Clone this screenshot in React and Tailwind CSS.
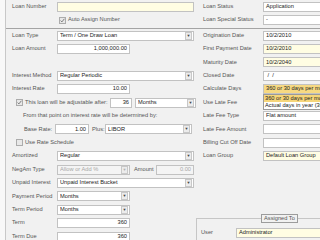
import React from "react";

const ROW = "h-[13.4px] flex items-center";

function Label({ children, w = "w-[45px]" }) {
  return <span className={`${w} shrink-0 text-[#555555] whitespace-nowrap`}>{children}</span>;
}

function TextBox({ value = "", yellow, right, w = "w-[73px]", disabled }) {
  return (
    <div
      className={`${w} h-[10px] shrink-0 border border-[#c2c2c2] flex items-center px-[2px] overflow-hidden whitespace-nowrap ${
        yellow ? "bg-[#fffde3]" : disabled ? "bg-[#f4f4f4]" : "bg-white"
      } ${right ? "justify-end" : ""} ${disabled ? "text-[#a8a8a8]" : "text-[#222222]"}`}
    >
      {value}
    </div>
  );
}

function Combo({ value, w = "w-[137px]", disabled, children, bg }) {
  return (
    <div
      className={`relative ${w} h-[10px] shrink-0 border border-[#c2c2c2] flex items-center pl-[2px] ${
        bg ? bg : disabled ? "bg-[#f4f4f4]" : "bg-white"
      } ${disabled ? "text-[#a8a8a8]" : "text-[#222222]"}`}
    >
      <span className="flex-1 overflow-hidden whitespace-nowrap">{value}</span>
      <span className="w-[7px] h-[8px] mr-[1px] border border-[#c8c8c8] bg-[#ececec] flex items-center justify-center">
        <span className={`text-[4px] leading-none ${disabled ? "text-[#b0b0b0]" : "text-[#444]"}`}>▼</span>
      </span>
      {children}
    </div>
  );
}

function Check({ checked }) {
  return (
    <span className="w-[7px] h-[7px] shrink-0 border border-[#acacac] bg-[#e8e8e8] flex items-center justify-center">
      {checked && (
        <svg width="5" height="5" viewBox="0 0 5 5">
          <path d="M0.6 2.6 L1.9 3.9 L4.4 0.8" stroke="#707070" strokeWidth="0.9" fill="none" />
        </svg>
      )}
    </span>
  );
}

export default function App() {
  return (
    <div
      className="w-[320px] h-[240px] overflow-hidden flex bg-[#f1f1f1] text-[5.7px] leading-none"
      style={{ fontFamily: "'Liberation Sans', Arial, sans-serif" }}
    >
      {/* left edge strip */}
      <div className="w-[6px] shrink-0 bg-[#f8f8f8] border-r border-[#c8c8c8]" />

      <div className="flex-1 flex flex-col min-w-0">
        {/* header section */}
        <div className="flex h-[28px]">
          <div className="w-[190px] shrink-0 pl-[6px]">
            <div className={ROW}>
              <Label>Loan Number</Label>
              <TextBox yellow w="w-[137px]" />
            </div>
            <div className={ROW}>
              <span className="w-[47px]" />
              <Check checked />
              <span className="ml-[2px] text-[#555555]">Auto Assign Number</span>
            </div>
          </div>
          <div className="flex-1 pl-[7px]">
            <div className={ROW}>
              <Label w="w-[60px]">Loan Status</Label>
              <TextBox value="Application" w="w-[70px]" />
            </div>
            <div className={ROW}>
              <Label w="w-[60px]">Loan Special Status</Label>
              <TextBox value="-" w="w-[70px]" />
            </div>
          </div>
        </div>
        <div className="h-px bg-[#a4a4a4]" />

        <div className="flex flex-1 min-h-0">
          {/* left column */}
          <div className="w-[190px] shrink-0 pl-[6px]">
            <div className={ROW}>
              <Label>Loan Type</Label>
              <Combo value="Term / One Draw Loan" />
            </div>
            <div className={ROW}>
              <Label>Loan Amount</Label>
              <TextBox value="1,000,000.00" right />
            </div>
            <div className="h-[13.4px]" />
            <div className={ROW}>
              <Label>Interest Method</Label>
              <Combo value="Regular Periodic" />
            </div>
            <div className={ROW}>
              <Label>Interest Rate</Label>
              <TextBox value="10.00" right />
            </div>
            <div className={ROW}>
              <span className="w-[4px]" />
              <Check checked />
              <span className="ml-[2px] w-[85px] shrink-0 text-[#555555] whitespace-nowrap">This loan will be adjustable after:</span>
              <TextBox value="36" right w="w-[22px]" />
              <span className="w-[3px]" />
              <Combo value="Months" w="w-[61px]" />
            </div>
            <div className={ROW}>
              <span className="pl-[11px] text-[#555555] whitespace-nowrap">From that point on interest rate will be determined by:</span>
            </div>
            <div className={ROW}>
              <span className="pl-[12px] w-[43px] shrink-0 text-[#555555] whitespace-nowrap">Base Rate:</span>
              <TextBox value="1.00" right w="w-[34px]" />
              <span className="w-[16px] shrink-0 pl-[3px] text-[#555555] whitespace-nowrap">Plus:</span>
              <Combo value="LIBOR" w="w-[87px]" />
            </div>
            <div className={ROW}>
              <span className="w-[4px]" />
              <Check />
              <span className="ml-[2px] text-[#555555]">Use Rate Schedule</span>
            </div>
            <div className={ROW}>
              <Label>Amortized</Label>
              <Combo value="Regular" />
            </div>
            <div className={ROW}>
              <Label>NegAm Type</Label>
              <Combo value="Allow or Add %" w="w-[73px]" disabled />
              <span className="w-[26px] shrink-0 pl-[4px] text-[#555555]">Amount</span>
              <TextBox value="0.00" right disabled w="w-[38px]" />
            </div>
            <div className={ROW}>
              <Label>Unpaid Interest</Label>
              <Combo value="Unpaid Interest Bucket" />
            </div>
            <div className={ROW}>
              <Label>Payment Period</Label>
              <Combo value="Months" w="w-[73px]" />
            </div>
            <div className={ROW}>
              <Label>Term Period</Label>
              <Combo value="Months" w="w-[73px]" />
            </div>
            <div className={ROW}>
              <Label>Term</Label>
              <TextBox value="360" right />
            </div>
            <div className={ROW}>
              <Label>Term Due</Label>
              <TextBox value="360" right />
            </div>
          </div>

          {/* right column */}
          <div className="flex-1 min-w-0">
            <div className="pl-[7px]">
              <div className={ROW}>
                <Label w="w-[60px]">Origination Date</Label>
                <TextBox value="10/2/2010" w="w-[70px]" />
              </div>
              <div className={ROW}>
                <Label w="w-[60px]">First Payment Date</Label>
                <TextBox value="10/2/2010" yellow w="w-[70px]" />
              </div>
              <div className={ROW}>
                <Label w="w-[60px]">Maturity Date</Label>
                <TextBox value="10/2/2040" yellow w="w-[70px]" />
              </div>
              <div className={ROW}>
                <Label w="w-[60px]">Closed Date</Label>
                <TextBox value={"\u00a0/\u00a0\u00a0/"} w="w-[70px]" />
              </div>
              <div className={`${ROW} relative z-10`}>
                <Label w="w-[60px]">Calculate Days</Label>
                <Combo value="360 or 30 days per month" w="w-[70px]" bg="bg-[#f6d982]">
                  <div className="absolute left-[-1px] top-[9px] w-[70px] bg-white border border-[#9a9a9a]">
                    <div className="h-[7px] bg-[#f6d67a] px-[1px] flex items-center whitespace-nowrap text-[#222222]">360 or 30 days per month</div>
                    <div className="h-[7px] px-[1px] flex items-center whitespace-nowrap text-[#222222]">Actual days in year (365)</div>
                  </div>
                </Combo>
              </div>
              <div className={ROW}>
                <Label w="w-[60px]">Use Late Fee</Label>
                <TextBox w="w-[70px]" />
              </div>
              <div className={ROW}>
                <Label w="w-[60px]">Late Fee Type</Label>
                <TextBox value="Flat amount" w="w-[70px]" />
              </div>
              <div className={ROW}>
                <Label w="w-[60px]">Late Fee Amount</Label>
                <TextBox w="w-[70px]" />
              </div>
              <div className={ROW}>
                <Label w="w-[60px]">Billing Cut Off Date</Label>
                <TextBox w="w-[70px]" />
              </div>
              <div className={ROW}>
                <Label w="w-[60px]">Loan Group</Label>
                <TextBox value="Default Loan Group" yellow w="w-[70px]" />
              </div>
            </div>

            {/* Assigned To group */}
            <div className="relative mt-[55px] border-t border-l border-[#c6c6c6] h-[40px] pl-[4px] pt-[9px]">
              <span className="absolute left-[64px] top-[-5px] h-[9px] px-[2px] flex items-center bg-[#f1f1f1] border border-[#9c9c9c] text-[#555555]">
                Assigned To
              </span>
              <div className="flex items-center">
                <Label w="w-[35px]">User</Label>
                <TextBox value="Administrator" yellow w="w-[90px]" />
              </div>
            </div>
          </div>
        </div>
      </div>
    </div>
  );
}
